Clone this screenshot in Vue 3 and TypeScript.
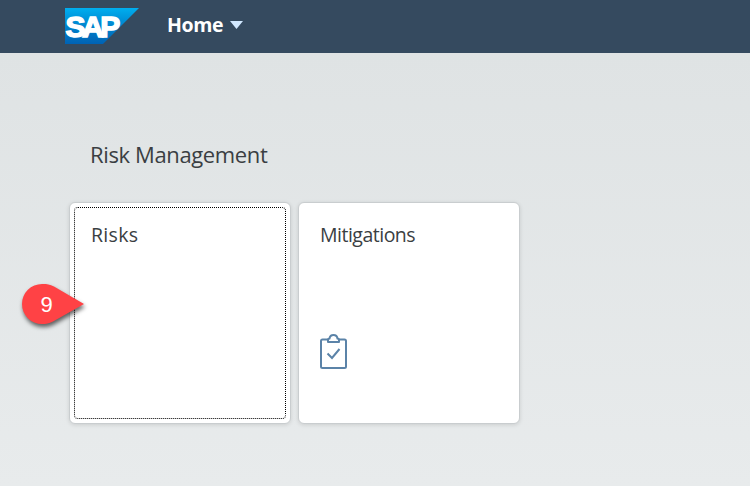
<script setup lang="ts">
interface Tile {
  title: string
  tracking: number
  focused: boolean
  icon: boolean
}

const tiles: Tile[] = [
  { title: 'Risks', tracking: 0.3, focused: true, icon: false },
  { title: 'Mitigations', tracking: -0.5, focused: false, icon: true },
]
</script>

<template>
  <div class="shell">
    <header class="bar">
      <svg class="logo" width="74" height="36" viewBox="0 0 74 36">
        <defs>
          <linearGradient id="brand" x1="0" y1="0" x2="0" y2="1">
            <stop offset="0" stop-color="#00aeef" />
            <stop offset="0.5" stop-color="#0084ce" />
            <stop offset="1" stop-color="#0062b4" />
          </linearGradient>
        </defs>
        <path d="M0 0H74L38 36H0Z" fill="url(#brand)" />
        <text class="logo-text" x="0.500" y="28.800">SAP</text>
      </svg>
      <div class="home">
        <span class="home-label">Home</span>
        <svg width="13" height="8" viewBox="0 0 13 8"><path d="M0 0H13L6.5 8Z" fill="#d1e8ff" /></svg>
      </div>
    </header>
    <main class="content">
      <h2 class="group-title">Risk Management</h2>
      <div class="tiles">
        <section v-for="tile in tiles" :key="tile.title" class="tile" :class="{ focused: tile.focused }">
          <h3 class="tile-title" :style="{ letterSpacing: `${tile.tracking}px` }">{{ tile.title }}</h3>
          <svg v-if="tile.icon" class="tile-icon" width="28" height="36" viewBox="0 0 28 36" fill="none" stroke="#5b83a8" stroke-width="2">
            <path d="M8 5.500H2.500Q1 5.500 1 7V32.500Q1 34 2.500 34H24.500Q26 34 26 32.500V7Q26 5.500 24.500 5.500H19" />
            <path d="M8 8V6Q8 4.500 9.500 4.500Q10 1 13.500 1T17.500 4.500Q19 4.500 19 6V8Z" stroke-linejoin="round" />
            <path d="M7.500 19.500L12 24L19.500 15" />
          </svg>
        </section>
      </div>
    </main>
    <div class="marker">
      <svg width="78" height="58" viewBox="0 0 78 58">
        <path class="marker-shape" d="M67 25L37 7.500C32 4.700 28 5 25 5A20 20 0 0 0 25 45C29 45 32 44.700 36 42.500Z" />
        <text class="marker-text" x="29.500" y="32.500" text-anchor="middle">9</text>
      </svg>
    </div>
  </div>
</template>

<style>
body {
  margin: 0;
}
</style>

<style scoped>
.shell {
  position: relative;
  box-sizing: border-box;
  height: 486px;
  overflow: hidden;
  background: linear-gradient(#dfe3e4 53px, #e8ebec);
  color: #3a3e42;
  font-family: "Open Sans", "Noto Sans", sans-serif;
}

.bar {
  display: flex;
  box-sizing: border-box;
  height: 53px;
  padding: 8px 0 0 65px;
  background: #354a5f;
}

.logo-text {
  font: 700 30px "Liberation Sans", sans-serif;
  letter-spacing: -3.500px;
  fill: #fff;
  stroke: #fff;
  stroke-width: 1.500;
}

.home {
  display: flex;
  align-items: center;
  height: 34px;
  margin-left: 28px;
  gap: 7px;
}

.home-label {
  margin-top: -2px;
  color: #fff;
  font-size: 19.500px;
  font-weight: 700;
  letter-spacing: -0.400px;
}

.content {
  padding: 86px 0 0 69px;
}

.group-title {
  margin: 0 0 0 21px;
  font-size: 22px;
  line-height: 30px;
  font-weight: 400;
  letter-spacing: -0.370px;
}

.tiles {
  display: flex;
  gap: 7px;
  margin-top: 33px;
}

.tile {
  display: flex;
  flex-direction: column;
  justify-content: space-between;
  box-sizing: border-box;
  width: 222px;
  height: 222px;
  padding: 19px 21px 53px;
  border: 1px solid #c9cdcf;
  border-radius: 6px;
  background: #fff;
  box-shadow: 0 1px 4px rgba(0, 0, 0, 0.12);
}

.focused {
  position: relative;
}

.focused::after {
  position: absolute;
  inset: 4px;
  border: 1px dotted #000;
  border-radius: 4px;
  content: "";
}

.tile-title {
  margin: 0;
  font-size: 19.500px;
  line-height: 26px;
  font-weight: 400;
}

.marker {
  position: absolute;
  top: 279px;
  left: 17px;
}

.marker svg {
  display: block;
  overflow: visible;
}

.marker-shape {
  fill: #ff4245;
  filter: drop-shadow(1px 3px 2px rgba(0, 0, 0, 0.6));
}

.marker-text {
  fill: #fff;
  font: 22px "Liberation Sans", sans-serif;
}
</style>
